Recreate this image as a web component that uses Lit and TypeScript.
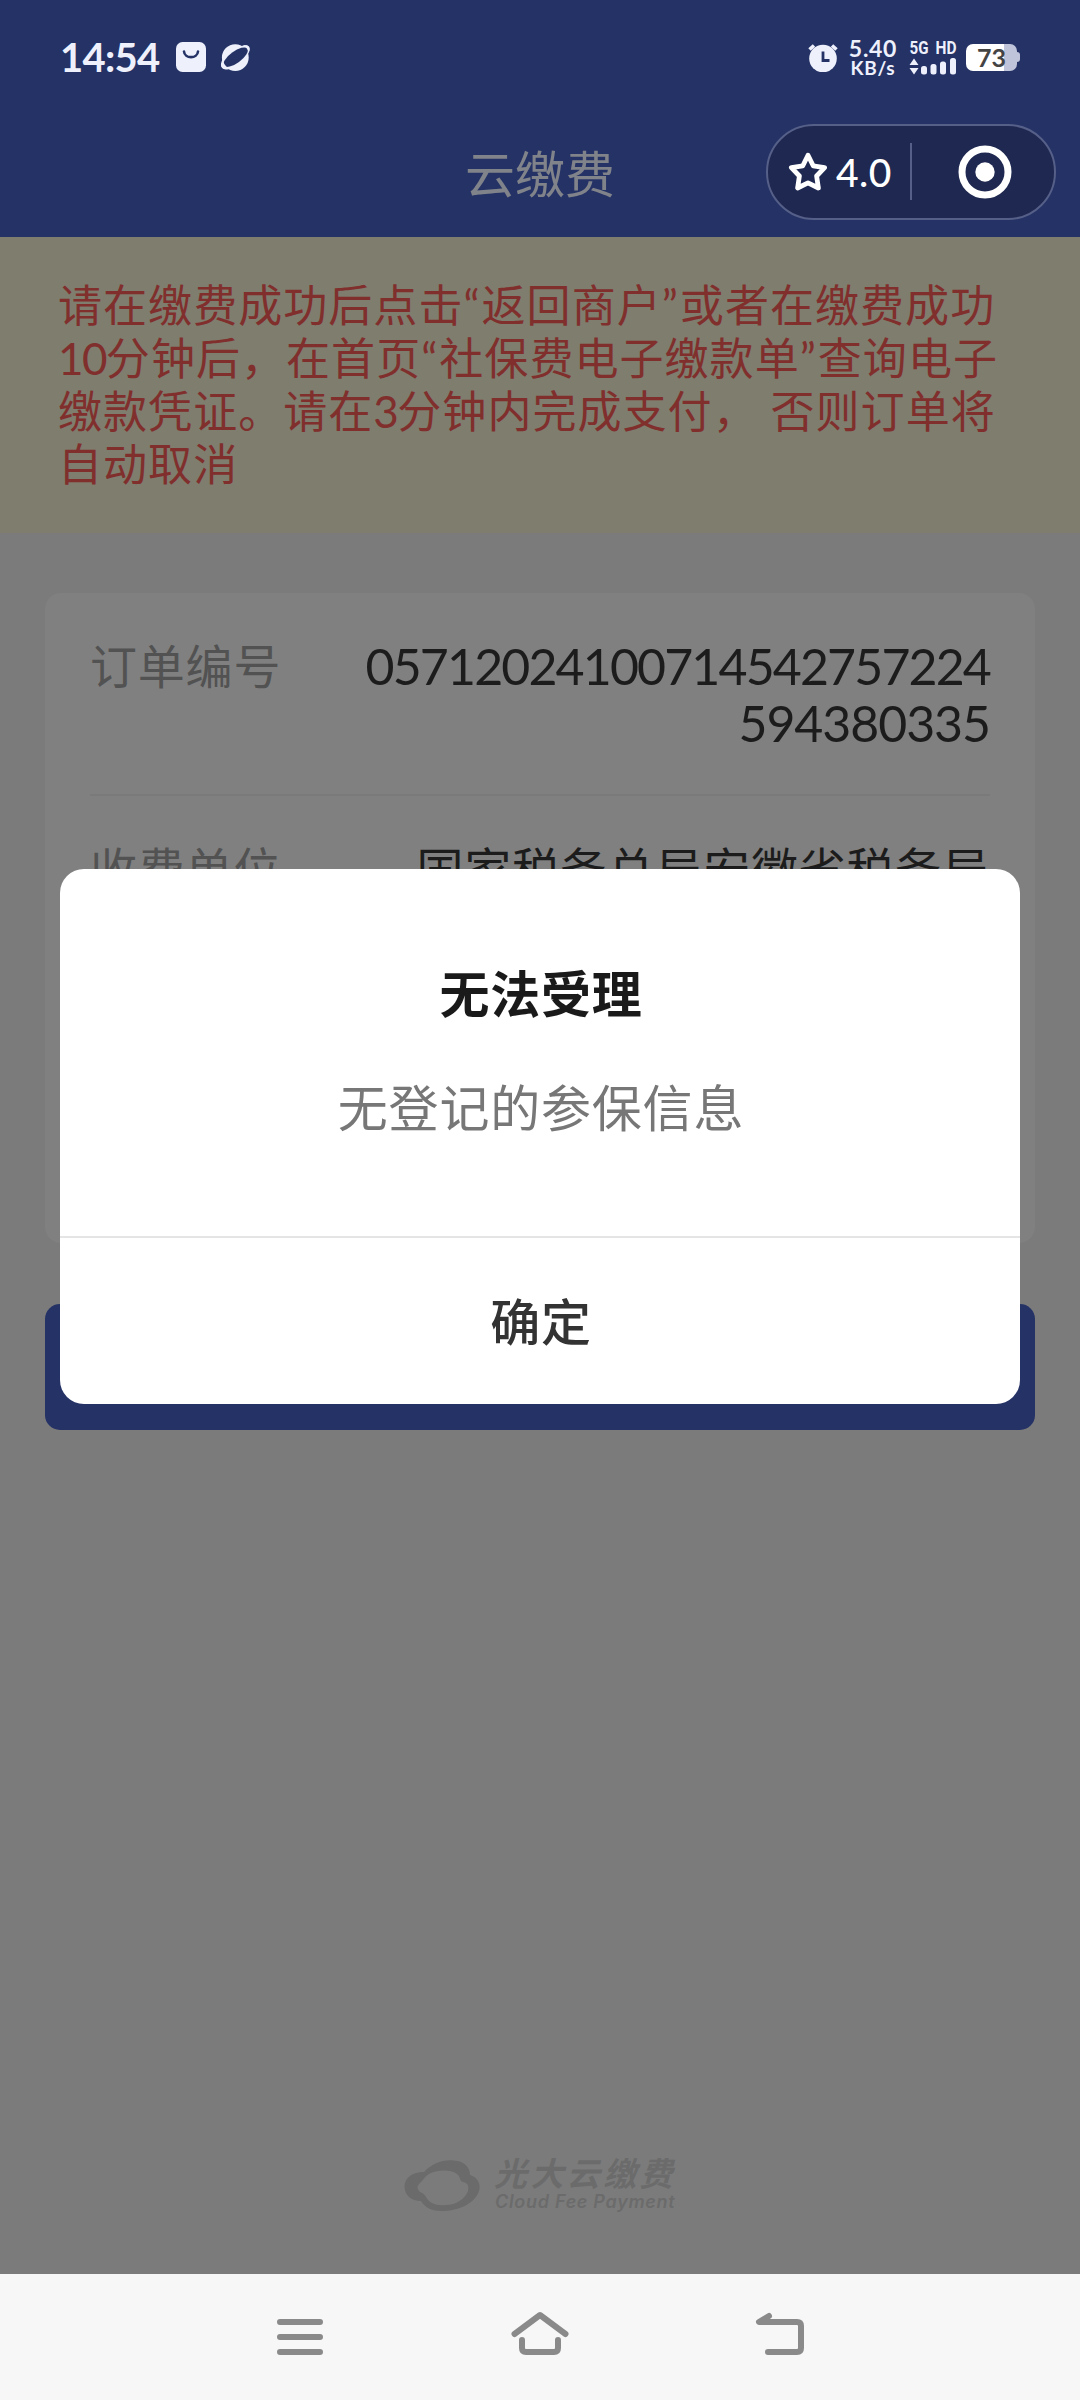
import { LitElement, html, css } from "lit";
import { customElement } from "lit/decorators.js";

@customElement("status-bar")
class StatusBar extends LitElement {
  static styles = css`
    :host { display: flex; height: 114px; box-sizing: border-box; padding: 36px 60px 0 60px; color: #eef1fc; align-items: flex-start; justify-content: space-between; font-weight: 700; }
    .group { display: flex; height: 42px; align-items: center; }
    .time { font-size: 40px; line-height: 42px; letter-spacing: -0.7px; width: 116px; white-space: nowrap; }
    svg { display: block; flex: none; }
    .planet { margin-left: 14px; }
    .speed { display: flex; flex-direction: column; align-items: center; width: 50px; margin-left: 10px; margin-right: 1px; font-size: 23px; line-height: 21px; letter-spacing: 0.7px; white-space: nowrap; }
    .unit { font-size: 19px; line-height: 18px; }
    .signal { display: flex; flex-direction: column; width: 50px; margin-left: 10px; }
    .net { font-family: Roboto, sans-serif; font-size: 17.5px; font-weight: 700; }
    .netbox { margin-top: -5px; margin-bottom: -3px; }
    .battery { display: flex; align-items: center; margin-left: 7px; }
    .cell { width: 51px; height: 27px; box-sizing: border-box; border-radius: 7px; background: linear-gradient(90deg, #fff 74%, #c0c4da 74%); color: #444; font-size: 25px; line-height: 27px; text-align: center; }
    .nub { width: 3px; height: 10px; border-radius: 0 3px 3px 0; background: #c0c4da; }
  `;
  render() {
    return html`
      <div class="group">
        <span class="time">14:54</span>
        <svg width="30" height="30" viewBox="0 0 30 30"><rect width="30" height="30" rx="6.5" fill="#eef1fc"/><path d="M8 9.5C8.6 17 21.4 17 22 9.5" fill="none" stroke="#243266" stroke-width="2.6" stroke-linecap="round"/></svg>
        <svg class="planet" width="31" height="30" viewBox="0 0 31 30">
          <circle cx="15.3" cy="15.6" r="13.4" fill="#eef1fc"/>
          <ellipse cx="15.4" cy="15.4" rx="17" ry="7.2" transform="rotate(-39 15.4 15.4)" fill="#eef1fc"/>
          <ellipse cx="15.6" cy="15.2" rx="14.5" ry="5.8" transform="rotate(-36 15.6 15.2)" fill="#243266"/>
          <path d="M23 3.6C27 2.6 30.6 3.6 29.6 8.6L28.2 12.2C28.6 8.2 27 5.2 23 3.6Z M2.8 17C1 20 0 24 2.4 25.9C4 27 6 26.9 8 26C4.8 23.6 3.2 20.8 2.8 17Z" fill="#eef1fc"/>
        </svg>
      </div>
      <div class="group">
        <svg width="30" height="30" viewBox="0 0 30 30"><circle cx="15" cy="16.5" r="13.8" fill="#eef1fc"/><path d="M1.5 7.5L6 3.5M28.5 7.5L24 3.5" stroke="#eef1fc" stroke-width="3.6"/><path d="M15 9.5V18.5H21.5" fill="none" stroke="#243266" stroke-width="2.8"/></svg>
        <div class="speed"><span>5.40</span><span class="unit">KB/s</span></div>
        <div class="signal">
          <svg class="netbox" width="50" height="26" viewBox="0 0 50 26" fill="#eef1fc"><text class="net" x="0.5" y="18.5" textLength="19" lengthAdjust="spacingAndGlyphs">5G</text><text class="net" x="26.5" y="18.5" textLength="21" lengthAdjust="spacingAndGlyphs">HD</text></svg>
          <svg width="48" height="17" viewBox="0 0 48 17" fill="#eef1fc"><path d="M5 0.500L9.500 7H0.500ZM5 16.500L9.500 10H0.500Z"/><rect x="12" y="8" width="6" height="8.500" rx="2.500"/><rect x="21.500" y="6" width="6" height="10.500" rx="2.500"/><rect x="31" y="3.500" width="6" height="13" rx="2.500"/><rect x="41" y="0" width="6" height="16.500" rx="2.500"/></svg>
        </div>
        <div class="battery"><div class="cell">73</div><div class="nub"></div></div>
      </div>`;
  }
}

@customElement("app-root")
class AppRoot extends LitElement {
  static styles = css`
    :host { display: flex; flex-direction: column; position: relative; width: 1080px; height: 2400px; background: #7b7b7b; overflow: hidden; font-family: Lato, "Noto Sans CJK SC", sans-serif; }
    .header { height: 237px; background: #243266; flex: none; }
    .bar { display: grid; grid-template-columns: 1fr 290px 1fr; height: 120px; align-items: center; padding: 0 24px; }
    .title { grid-column: 2; text-align: center; font-size: 50px; line-height: 60px; color: #81838a; }
    .capsule { justify-self: end; display: flex; align-items: center; width: 290px; height: 96px; box-sizing: border-box; border: 2px solid #555f87; border-radius: 48px; background: #1e2850; color: #fff; font-size: 39px; margin-top: -5px; padding-left: 20px; }
    .capsule svg { display: block; flex: none; }
    .score { margin-left: 8px; width: 56px; line-height: 48px; letter-spacing: 0.5px; font-weight: 500; }
    .sep { width: 2px; height: 57px; background: #555f87; margin-left: 18px; }
    .target { margin-left: 46px; }
    .notice { height: 296px; box-sizing: border-box; background: #7f7d6e; color: #802f2d; padding: 42px 58px; font-size: 44px; letter-spacing: 1.05px; line-height: 53px; flex: none; }
    .line { display: block; white-space: nowrap; word-spacing: 0.5px; }
    .quote { letter-spacing: 2px; }
    .num { letter-spacing: -1.6px; }
    .card { margin: 60px 45px 0; height: 650px; box-sizing: border-box; border-radius: 16px; background: #808080; padding: 0 45px; overflow: hidden; flex: none; }
    .row { display: flex; justify-content: space-between; padding: 45px 0 42px; border-bottom: 2px solid #7a7a7a; font-size: 47px; letter-spacing: 0.8px; line-height: 57px; color: #1c1c1c; }
    .label { color: #525252; }
    .value { text-align: right; }
    .digits { font-size: 50px; letter-spacing: -1.85px; }
    .digits span { display: block; }
    .digits .rest { letter-spacing: -1.05px; }
    .pay { margin: 61px 45px 0; height: 126px; border-radius: 15px; background: #243266; flex: none; }
    .brand { margin-top: auto; height: 118px; display: flex; justify-content: center; gap: 15px; color: #6b6b6b; flex: none; }
    .brand svg { display: block; margin-top: 2px; }
    .words { display: flex; flex-direction: column; font-style: italic; font-weight: 700; width: 180px; white-space: nowrap; }
    .cn { font-size: 33px; line-height: 34px; letter-spacing: 3.4px; margin-left: -2px; }
    .en { font-family: Inter, sans-serif; font-size: 18px; line-height: 24px; letter-spacing: 0.7px; font-weight: 600; margin-left: -1px; }
    .nav { height: 126px; background: #f7f7f7; display: flex; justify-content: center; gap: 180px; align-items: center; flex: none; }
    .nav svg { display: block; }
    .dialog { position: absolute; left: 60px; top: 869px; width: 960px; height: 535px; border-radius: 24px; background: #fff; display: flex; flex-direction: column; text-align: center; overflow: hidden; font-size: 50px; letter-spacing: 0.8px; line-height: 60px; }
    .heading { padding: 95px 0 0 2px; font-weight: 700; color: #1a1a1a; }
    .message { padding: 54px 0 0 2px; color: #777; }
    .ok { margin-top: auto; height: 166px; border-top: 2px solid #e5e5e5; line-height: 168px; font-weight: 500; color: #333; padding-left: 2px; }
  `;
  render() {
    return html`
      <div class="header">
        <status-bar></status-bar>
        <div class="bar">
          <div class="title">云缴费</div>
          <div class="capsule">
            <svg width="40" height="40" viewBox="0 0 40 40"><path d="M20 3.200L25.200 13.800L36.600 15.600L28.600 24L30.400 36L20 30.800L9.600 36L11.400 24L3.400 15.600L14.800 13.800Z" fill="none" stroke="#fff" stroke-width="4.800" stroke-linejoin="round"/></svg>
            <span class="score">4.0</span>
            <span class="sep"></span>
            <svg class="target" width="54" height="54" viewBox="0 0 54 54"><circle cx="27" cy="27" r="23" fill="none" stroke="#fff" stroke-width="7"/><circle cx="27" cy="27" r="9.700" fill="#fff"/></svg>
          </div>
        </div>
      </div>
      <div class="notice">
        <span class="line">请在缴费成功后点击<span class="quote">“</span>返回商户<span class="quote">”</span>或者在缴费成功</span>
        <span class="line"><span class="num">10</span>分钟后，在首页<span class="quote">“</span>社保费电子缴款单<span class="quote">”</span>查询电子</span>
        <span class="line">缴款凭证。请在<span class="num">3</span>分钟内完成支付， 否则订单将</span>
        <span class="line">自动取消</span>
      </div>
      <div class="card">
        <div class="row"><span class="label">订单编号</span><div class="value digits"><span>05712024100714542757224</span><span class="rest">594380335</span></div></div>
        <div class="row"><span class="label">收费单位</span><span class="value">国家税务总局安徽省税务局</span></div>
      </div>
      <div class="pay"></div>
      <div class="brand">
        <svg width="77" height="56" viewBox="0 -2 77 56"><path fill="#6b6b6b" fill-rule="evenodd" d="M0.500 26C1 18 8 12 20 12C28 3 40 -1 50 0.500C60 1 66 7 66 15C74 17 77 25 75 31C71 43 56 51 37 51C29 51 21 48 17 41C7 41 0.500 35 0.500 26ZM15 24C18 22 20 17 25 14C32 10 46 9 53 14C57 17 55 21 59 22C64 23 65 26 64 31C61 39 52 45 42 45C32 46 25 43 22 37C20 33 17 33 15 31C13 29 13 26 15 24Z"/></svg>
        <div class="words"><span class="cn">光大云缴费</span><span class="en">Cloud Fee Payment</span></div>
      </div>
      <div class="nav">
        <svg width="60" height="60" viewBox="270 2307 60 60"><path d="M280 2322H320M280 2337H320M280 2352H320" stroke="#8a8a8a" stroke-width="6" stroke-linecap="round"/></svg>
        <svg width="60" height="60" viewBox="510 2307 60 60" fill="none" stroke="#8a8a8a" stroke-width="6" stroke-linecap="round" stroke-linejoin="round"><path d="M514.500 2334L540 2315L565.500 2334"/><path d="M522 2340V2348Q522 2352 526 2352H554Q558 2352 558 2348V2340"/></svg>
        <svg width="60" height="60" viewBox="750 2307 60 60" fill="none" stroke="#8a8a8a" stroke-width="6" stroke-linecap="round" stroke-linejoin="round"><path d="M769 2316L759 2322H797Q801 2322 801 2326V2348Q801 2352 797 2352H768"/></svg>
      </div>
      <div class="dialog">
        <div class="heading">无法受理</div>
        <div class="message">无登记的参保信息</div>
        <div class="ok">确定</div>
      </div>`;
  }
}
